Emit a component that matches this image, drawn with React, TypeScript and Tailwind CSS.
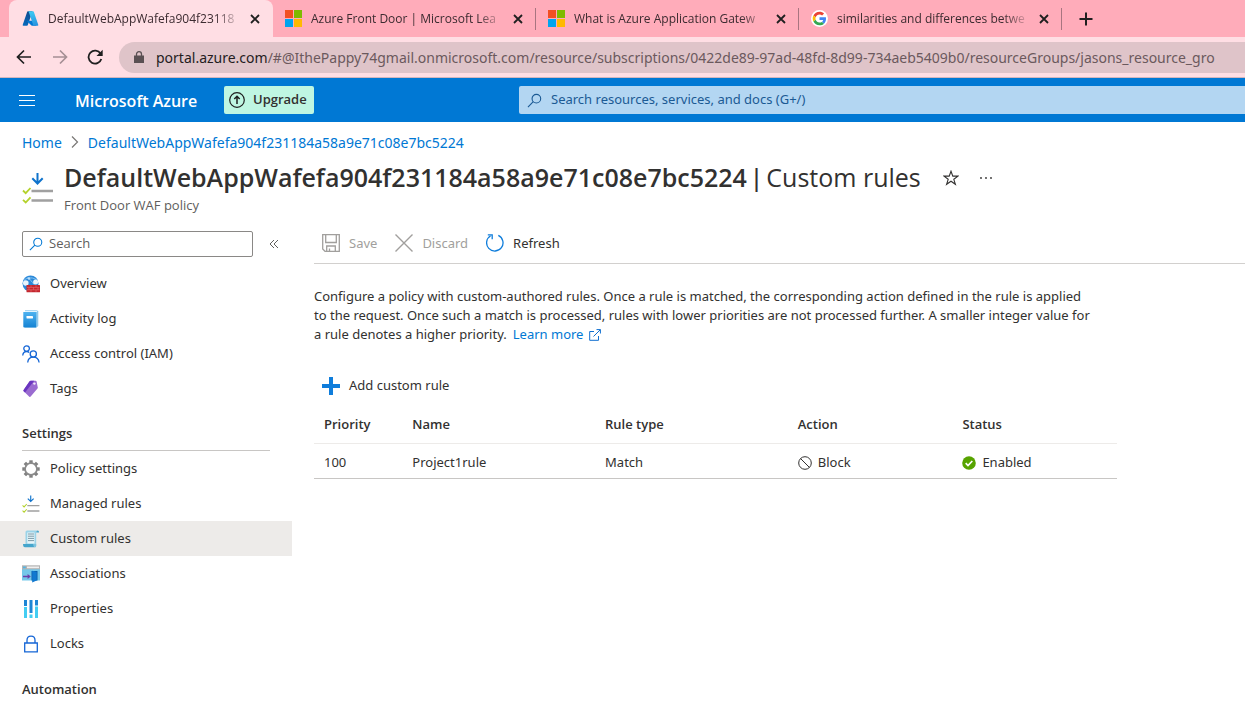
import React from "react";

type IconProps = { className?: string };

const AzureLogo = ({ className = "" }: IconProps) => (
  <svg viewBox="0 0 96 96" className={className} aria-hidden="true">
    <defs>
      <linearGradient id="azA" x1="0.6" y1="0" x2="0.3" y2="1">
        <stop offset="0" stopColor="#114a8b" />
        <stop offset="1" stopColor="#0669bc" />
      </linearGradient>
      <linearGradient id="azB" x1="0.4" y1="0" x2="0.6" y2="1">
        <stop offset="0" stopColor="#3ccbf4" />
        <stop offset="1" stopColor="#2892df" />
      </linearGradient>
    </defs>
    <path fill="url(#azA)" d="M33.3 6.5h26L32.4 86.500a4.200 4.200 0 0 1-3.900 2.800H8.100a4.100 4.100 0 0 1-3.900-5.500L29.400 9.400a4.200 4.200 0 0 1 3.900-2.900z" />
    <path fill="#0078d4" d="M71.200 60.300H29.900a1.900 1.900 0 0 0-1.300 3.300l26.500 24.800a4.200 4.200 0 0 0 2.900 1.100h23.400z" />
    <path fill="url(#azB)" d="M66.600 9.400a4.100 4.100 0 0 0-3.900-2.900H33.700a4.100 4.100 0 0 1 3.900 2.900l25.200 74.500a4.100 4.100 0 0 1-3.900 5.500h29a4.100 4.100 0 0 0 3.900-5.500z" />
  </svg>
);

const MicrosoftLogo = ({ className = "" }: IconProps) => (
  <svg viewBox="0 0 17 17" className={className} aria-hidden="true">
    <path fill="#f25022" d="M0 0h8v8H0z" />
    <path fill="#7fba00" d="M9 0h8v8H9z" />
    <path fill="#00a4ef" d="M0 9h8v8H0z" />
    <path fill="#ffb900" d="M9 9h8v8H9z" />
  </svg>
);

const GoogleLogo = ({ className = "" }: IconProps) => (
  <svg viewBox="-6 -6 60 60" className={className} aria-hidden="true">
    <circle cx="24" cy="24" r="30" fill="#fff" />
    <path fill="#EA4335" d="M24 9.500c3.540 0 6.710 1.220 9.210 3.600l6.850-6.850C35.900 2.380 30.470 0 24 0 14.620 0 6.510 5.380 2.560 13.220l7.980 6.190C12.430 13.720 17.740 9.500 24 9.500z" />
    <path fill="#4285F4" d="M46.980 24.550c0-1.570-.15-3.090-.38-4.550H24v9.020h12.940c-.58 2.960-2.260 5.480-4.780 7.180l7.730 6c4.510-4.180 7.090-10.360 7.090-17.650z" />
    <path fill="#FBBC05" d="M10.530 28.590c-.48-1.450-.76-2.990-.76-4.590s.27-3.140.76-4.590l-7.980-6.190C.92 16.460 0 20.120 0 24c0 3.880.92 7.540 2.560 10.780l7.970-6.190z" />
    <path fill="#34A853" d="M24 48c6.480 0 11.930-2.130 15.890-5.810l-7.730-6c-2.150 1.450-4.920 2.300-8.160 2.300-6.260 0-11.570-4.220-13.470-9.910l-7.980 6.190C6.510 42.620 14.620 48 24 48z" />
  </svg>
);

const CloseGlyph = () => (
  <svg viewBox="0 0 10 10" className="size-2.5" fill="none" stroke="#1f1f1f" strokeWidth="1.800" aria-hidden="true">
    <path d="M1 1l8 8M9 1L1 9" />
  </svg>
);

const Magnifier = ({ className = "" }: IconProps) => (
  <svg viewBox="0 0 16 16" className={className} fill="none" stroke="currentColor" strokeWidth="1.200" aria-hidden="true">
    <circle cx="10" cy="6" r="4.600" />
    <path d="M6.700 9.300L1 15" />
  </svg>
);

const OverviewIcon = () => (
  <svg viewBox="0 0 18 18" className="size-[18px]" aria-hidden="true">
    <circle cx="8.500" cy="8.500" r="8" fill="#2b88d8" />
    <path d="M2 5.500C5 2 12 2 15 5.500M5 1.500c3 3 5 5 7 8" stroke="#83c3f3" strokeWidth="1" fill="none" />
    <circle cx="3.800" cy="8" r="2.800" fill="#e8f4fc" />
    <circle cx="13.600" cy="7" r="2.500" fill="#e8f4fc" />
    <circle cx="7" cy="3.500" r="1.200" fill="#b9defa" />
    <rect x="4.500" y="10" width="13.500" height="7.200" rx="0.500" fill="#c4262e" />
    <path d="M5 12.400H17.500M5 14.800H17.500M9 10.300v2.100M14 10.300v2.100M7 12.400v2.400M11.500 12.400v2.400M16 12.400v2.400M9 14.800v2.100M14 14.800v2.100" stroke="#ea6b70" strokeWidth="0.600" />
  </svg>
);

const ActivityLogIcon = () => (
  <svg viewBox="0 0 18 18" className="size-[18px]" aria-hidden="true">
    <defs>
      <linearGradient id="book" x1="0" y1="0" x2="0" y2="1">
        <stop offset="0" stopColor="#4db2f0" />
        <stop offset="1" stopColor="#1583d3" />
      </linearGradient>
    </defs>
    <path d="M3 .3h11.500l1.800.6V16l-1.800 1.500H3z" fill="#8fc9ec" />
    <path d="M3 1h12v1H3z" fill="#e4f4fd" />
    <path d="M1.300 2h12.900v15.500H2.300a1 1 0 0 1-1-1z" fill="url(#book)" />
    <rect x="4.500" y="6" width="6.500" height="2.500" rx="0.400" fill="#fff" />
  </svg>
);

const AccessIcon = () => (
  <svg viewBox="0 0 18 18" className="size-[18px]" fill="none" stroke="#1566d6" strokeWidth="1.300" aria-hidden="true">
    <circle cx="4.600" cy="3.600" r="2.800" />
    <path d="M.7 10.500C1 8 2.600 6.500 4.600 6.500c1 0 1.900.4 2.600 1" />
    <circle cx="11.300" cy="9" r="3.100" />
    <path d="M5.700 17.500c.3-3.200 2.600-5.300 5.600-5.300s5.400 2.100 5.800 5.300" />
  </svg>
);

const TagIcon = () => (
  <svg viewBox="0 0 18 18" className="size-[18px]" aria-hidden="true">
    <path d="M8.600.7l5 .1c.5 0 .9.300 1 .8l1.200 5.900c.1.400 0 .8-.3 1.100l-6.800 8c-.4.500-.9.500-1.400.1L1.700 11.300c-.4-.4-.5-.900-.1-1.300L7.600 1.200c.3-.3.600-.5 1-.5z" fill="#9a6bd0" />
    <path d="M8.600.7l3.600.1L3 12.500 1.700 11.300c-.4-.4-.5-.900-.1-1.300L7.600 1.200c.3-.3.600-.5 1-.5z" fill="#6a35c0" />
    <circle cx="12.400" cy="3.600" r="1.200" fill="#f1e8fb" />
  </svg>
);

const gearTeeth = [0, 45, 90, 135, 180, 225, 270, 315];
const PolicyGearIcon = () => (
  <svg viewBox="0 0 18 18" className="size-[18px]" aria-hidden="true">
    {gearTeeth.map((angle) => (
      <path key={angle} d="M7.300.3h3.400v3H7.300z" fill="#808080" transform={`rotate(${angle} 9 9)`} />
    ))}
    <circle cx="9" cy="9" r="5.900" fill="#fff" stroke="#8b8b8b" strokeWidth="1.700" />
  </svg>
);

const RulesIcon = ({ className = "" }: IconProps) => (
  <svg viewBox="0 0 32 32" className={className} fill="none" aria-hidden="true">
    <path d="M15.500 1v10M10.300 6.300l5.200 5.200 5.200-5.200" stroke="#0f73cc" strokeWidth="2" />
    <path d="M1 18.500l2.700 2.700L8.500 16M1 27.800l2.700 2.700 4.800-5.200" stroke="#b4d22c" strokeWidth="1.800" />
    <path d="M9.500 19H31M9.500 28.500H31" stroke="#a0a0a0" strokeWidth="2.400" />
  </svg>
);

const ScrollIcon = () => (
  <svg viewBox="0 0 18 18" className="size-[18px]" aria-hidden="true">
    <path d="M5.200.5h10.300c-1 .4-1.300 1-1.300 2V16H3.500V2.500C3.500 1.200 4 .5 5.200.5z" fill="#9bd3e8" />
    <path d="M14.200 2.600c0-1.300.6-2.100 1.500-2.100s1.300.8 1.300 2.100z" fill="#45a5cc" />
    <path d="M5.300 2.500h7.200v11H5.300z" fill="#e6f5fa" />
    <path d="M6 4h6M6 6.200h6M6 8.400h6M6 10.600h6" stroke="#6f8f9d" strokeWidth="0.900" />
    <path d="M1 14h10.500c0 2 .6 3.300 2 3.300H3C1.600 17.300 1 16 1 14z" fill="#45a5cc" />
    <path d="M11.500 14h2.700v1.500c0 1-.3 1.800-.8 1.800-1.300 0-1.900-1.300-1.900-3.300z" fill="#7cc3df" />
  </svg>
);

const AssociationsIcon = () => (
  <svg viewBox="0 0 18 18" className="size-[18px]" aria-hidden="true">
    <path d="M0 1h18v14.500H0z" fill="#74c8ea" />
    <path d="M0 .3h18v4H0z" fill="#b3b3b3" />
    <path d="M1 1.500h2.800v1.700H1z" fill="#50b5e5" />
    <path d="M5 1.500h12v1.700H5z" fill="#efefef" />
    <path d="M9.500 6h6v9.500h-6z" fill="#0a5ca8" />
    <path d="M10.200 5.800l4.500 1.200v8.500l-4.500 2z" fill="#1179d0" />
    <path d="M1 10.800h4.600V9L8.800 11.500 5.600 14v-1.700H1z" fill="#6b3fa8" />
  </svg>
);

const PropertiesIcon = () => (
  <svg viewBox="0 0 18 18" className="size-[18px]" aria-hidden="true">
    <path d="M2 0h3v6H2zM7.500 0h3v13h-3zM13 0h3v5.500h-3z" fill="#1e86d5" />
    <path d="M2 7h3v11H2zM7.500 14.500h3V18h-3zM13 6.500h3V18h-3z" fill="#43cdf2" />
  </svg>
);

const LockIcon = () => (
  <svg viewBox="0 0 18 18" className="size-[18px]" fill="none" stroke="#1566d6" strokeWidth="1.300" aria-hidden="true">
    <path d="M2.700 8h12.600v8.800H2.700z" />
    <path d="M5 8V5.300C5 2.900 6.700 1.200 9 1.200s4 1.700 4 4.100V8" />
  </svg>
);

const SaveIcon = () => (
  <svg viewBox="0 0 18 18" className="size-[18px]" fill="none" stroke="#a19f9d" strokeWidth="1.300" aria-hidden="true">
    <path d="M.7.7h16.600v16.600H3L.7 15z" />
    <path d="M3.700.7v7.800h10.600V.7M4.700 17.300v-5.300h8.600v5.300M7.500 17.300v-2.800" />
  </svg>
);

const DiscardIcon = () => (
  <svg viewBox="0 0 18 18" className="size-[18px]" fill="none" stroke="#a19f9d" strokeWidth="1.400" aria-hidden="true">
    <path d="M.5.500l17 17M17.500.500l-17 17" />
  </svg>
);

const RefreshIcon = () => (
  <svg viewBox="0 0 18 18" className="size-[18px]" fill="none" stroke="#0f7ddb" strokeWidth="1.300" aria-hidden="true">
    <path d="M12.300 1.400a8.200 8.200 0 1 1-7.700.4" />
    <path d="M1.800.8h4.400v4.400" />
  </svg>
);

const tabs = [
  { title: "DefaultWebAppWafefa904f23118", icon: <AzureLogo className="size-[17px]" />, active: true },
  { title: "Azure Front Door | Microsoft Lea", icon: <MicrosoftLogo className="size-[17px]" />, active: false },
  { title: "What is Azure Application Gatew", icon: <MicrosoftLogo className="size-[17px]" />, active: false },
  { title: "similarities and differences betwe", icon: <GoogleLogo className="size-[17px]" />, active: false },
];

function TabStrip() {
  return (
    <div role="tablist" className="flex h-[37px] items-stretch overflow-hidden bg-[#ffacba] pl-[9px]">
      {tabs.map((tab) => (
        <div
          key={tab.title}
          role="tab"
          aria-selected={tab.active}
          className={`flex shrink-0 items-center ${tab.active ? "w-[264px] rounded-t-lg bg-[#ffdee4] pl-[13px]" : "w-[263px] pl-3"}`}
        >
          {tab.icon}
          <span className="ml-[9px] w-[194px] overflow-hidden whitespace-nowrap text-[12px] text-[#3c2b30] [mask-image:linear-gradient(to_right,black_86%,transparent)]">
            {tab.title}
          </span>
          <button aria-label="Close tab" className="ml-2 grid place-items-center">
            <CloseGlyph />
          </button>
          {!tab.active && <span className="ml-auto h-[22px] w-px bg-[#a87580]" />}
        </div>
      ))}
      <button aria-label="New tab" className="ml-[17px] grid place-items-center">
        <svg viewBox="0 0 14 14" className="size-3.5" stroke="#1f1f1f" strokeWidth="2" aria-hidden="true">
          <path d="M7 .5v13M.5 7h13" />
        </svg>
      </button>
    </div>
  );
}

function AddressBar() {
  return (
    <div className="flex h-[41px] items-center overflow-hidden border-b border-[#d3b6bd] bg-[#ffdee4] pl-4">
      <button aria-label="Back" className="grid place-items-center">
        <svg viewBox="0 0 16 16" className="size-4" fill="none" stroke="#1f1f1f" strokeWidth="1.700" aria-hidden="true">
          <path d="M15 8H2M8 1.500L1.500 8 8 14.500" />
        </svg>
      </button>
      <button aria-label="Forward" disabled className="ml-5 grid place-items-center">
        <svg viewBox="0 0 16 16" className="size-4" fill="none" stroke="#a58f94" strokeWidth="1.700" aria-hidden="true">
          <path d="M1 8h13M8 1.500L14.500 8 8 14.500" />
        </svg>
      </button>
      <button aria-label="Reload" className="ml-[19px] grid place-items-center">
        <svg viewBox="0 0 16 16" className="size-4" fill="none" stroke="#1f1f1f" strokeWidth="1.800" aria-hidden="true">
          <path d="M13.600 4.700A6.500 6.500 0 1 0 14.300 10" />
          <path d="M15.700.800v6.200H9.500z" fill="#1f1f1f" stroke="none" />
        </svg>
      </button>
      <div className="ml-4 flex h-[31px] min-w-0 flex-1 items-center overflow-hidden rounded-l-full bg-[#dfc4c9] pl-[15px]">
        <svg viewBox="0 0 10 12" className="h-3 w-2.5 shrink-0" aria-hidden="true">
          <path d="M0 4.600h10V12H0z" fill="#5a5053" />
          <path d="M2.500 5V3.200a2.500 2.500 0 0 1 5 0V5" fill="none" stroke="#5a5053" strokeWidth="1.300" />
        </svg>
        <span className="ml-3 font-['Noto_Sans',sans-serif] text-[14px] whitespace-nowrap text-[#6b595d]">
          <span className="text-[#241c1e]">portal.azure.com</span>
          /#@IthePappy74gmail.onmicrosoft.com/resource/subscriptions/0422de89-97ad-48fd-8d99-734aeb5409b0/resourceGroups/jasons_resource_gro
        </span>
      </div>
    </div>
  );
}

function PortalHeader() {
  return (
    <header className="flex h-11 items-center overflow-hidden bg-[#0078d4] pl-[19px]">
      <button aria-label="Show portal menu" className="grid place-items-center">
        <svg viewBox="0 0 16 12" className="h-3 w-4" stroke="#fff" strokeWidth="1" aria-hidden="true">
          <path d="M0 1.500h16M0 6.500h16M0 11.500h16" />
        </svg>
      </button>
      <a href="#home" className="ml-10 w-[149px] pt-0.5 text-[16px] font-semibold whitespace-nowrap text-white">
        Microsoft Azure
      </a>
      <button className="flex h-7 w-[90px] items-center gap-2 rounded-xs bg-[#bff6e2] pl-[5px] text-[13px] font-semibold text-[#323130]">
        <svg viewBox="0 0 16 16" className="size-4 shrink-0" fill="none" stroke="#1f1f1f" strokeWidth="1.200" aria-hidden="true">
          <circle cx="8" cy="8" r="7.300" />
          <path d="M8 12V4.500M5.300 7L8 4.300 10.700 7" strokeWidth="1.500" />
        </svg>
        Upgrade
      </button>
      <label className="ml-[205px] flex h-7 flex-1 items-center rounded-l-xs bg-[#b3d6f2] pl-2 text-[#1b5a94]">
        <Magnifier className="size-[15px] shrink-0" />
        <input
          type="text"
          aria-label="Search resources, services, and docs"
          placeholder="Search resources, services, and docs (G+/)"
          className="ml-[9px] min-w-0 flex-1 bg-transparent font-['Noto_Sans',sans-serif] text-[13px] outline-none placeholder:text-[#1b5a94]"
        />
      </label>
    </header>
  );
}

function TitleArea() {
  return (
    <div className="pl-[22px]">
      <nav aria-label="Breadcrumb" className="flex h-10 items-center font-['Noto_Sans',sans-serif] text-[14px] text-[#0078d4]">
        <a href="#home">Home</a>
        <svg viewBox="0 0 8 12" className="mx-[9px] h-3 w-2" fill="none" stroke="#797775" strokeWidth="1.200" aria-hidden="true">
          <path d="M1 .5L6.500 6 1 11.500" />
        </svg>
        <a href="#policy">DefaultWebAppWafefa904f231184a58a9e71c08e7bc5224</a>
      </nav>
      <div className="flex">
        <RulesIcon className="mt-2.5 size-8 shrink-0" />
        <div className="ml-2.5">
          <div className="flex h-[30px] items-center">
            <h1 className="text-[25px] leading-[30px] font-semibold whitespace-nowrap text-[#323130]">
              DefaultWebAppWafefa904f231184a58a9e71c08e7bc5224
              <span className="font-normal">
                {" "}
                <span className="font-['Liberation_Sans',sans-serif]">|</span> Custom rules
              </span>
            </h1>
            <button aria-label="Add to favorites" className="ml-[22px] grid place-items-center pt-0.5">
              <svg viewBox="0 0 16 16" className="size-4" fill="none" stroke="#323130" strokeWidth="1.100" aria-hidden="true">
                <path d="M8 1.200l1.800 4.900h5.200l-4.200 3.200 1.600 5L8 11.200l-4.400 3.100 1.600-5L1 6.100h5.200z" />
              </svg>
            </button>
            <button aria-label="More" className="ml-5 grid place-items-center pt-0.5">
              <svg viewBox="0 0 14 4" className="h-1 w-3.5" fill="#323130" aria-hidden="true">
                <circle cx="2" cy="2" r="0.900" />
                <circle cx="7" cy="2" r="0.900" />
                <circle cx="12" cy="2" r="0.900" />
              </svg>
            </button>
          </div>
          <p className="leading-[26px] text-[#605e5c]">Front Door WAF policy</p>
        </div>
      </div>
    </div>
  );
}

const generalItems = [
  { label: "Overview", icon: <OverviewIcon /> },
  { label: "Activity log", icon: <ActivityLogIcon /> },
  { label: "Access control (IAM)", icon: <AccessIcon /> },
  { label: "Tags", icon: <TagIcon /> },
];

const settingsItems = [
  { label: "Policy settings", icon: <PolicyGearIcon /> },
  { label: "Managed rules", icon: <RulesIcon className="size-[18px]" /> },
  { label: "Custom rules", icon: <ScrollIcon />, selected: true },
  { label: "Associations", icon: <AssociationsIcon /> },
  { label: "Properties", icon: <PropertiesIcon /> },
  { label: "Locks", icon: <LockIcon /> },
];

function MenuList({ items }: { items: { label: string; icon: React.ReactNode; selected?: boolean }[] }) {
  return (
    <ul className="font-['Noto_Sans',sans-serif]">
      {items.map((item) => (
        <li key={item.label}>
          <a
            href="#item"
            aria-current={item.selected ? "page" : undefined}
            className={`flex h-[35px] items-center gap-2.5 pl-[22px] ${item.selected ? "bg-[#edebe9]" : ""}`}
          >
            {item.icon}
            {item.label}
          </a>
        </li>
      ))}
    </ul>
  );
}

function Sidebar() {
  return (
    <aside className="w-[292px] shrink-0">
      <div className="flex items-center pl-[22px]">
        <label className="flex h-[26px] w-[231px] items-center rounded-xs border border-[#8a8886] pl-1.5 text-[#0078d4]">
          <Magnifier className="size-3.5 shrink-0" />
          <input
            type="text"
            aria-label="Search menu"
            placeholder="Search"
            className="ml-1.5 min-w-0 flex-1 bg-transparent text-[13px] text-[#323130] outline-none placeholder:text-[#605e5c]"
          />
        </label>
        <button aria-label="Collapse menu" className="ml-4 grid place-items-center">
          <svg viewBox="0 0 10 10" className="size-2.5" fill="none" stroke="#605e5c" strokeWidth="1" aria-hidden="true">
            <path d="M5 1L1 5l4 4M9 1L5 5l4 4" />
          </svg>
        </button>
      </div>
      <div className="pt-[9px]">
        <MenuList items={generalItems} />
        <h2 className="mx-[22px] mt-3 flex h-[33px] items-center border-b border-[#c8c6c4] font-semibold">Settings</h2>
        <MenuList items={settingsItems} />
        <h2 className="mx-[22px] mt-3 flex h-[33px] items-center font-semibold">Automation</h2>
      </div>
    </aside>
  );
}

function RulesTable() {
  return (
    <table className="mt-1.5 w-full table-fixed border-b border-[#c8c6c4] text-left">
      <colgroup>
        <col className="w-[11%]" />
        <col className="w-[24%]" />
        <col className="w-[24%]" />
        <col className="w-[20.5%]" />
        <col className="w-[20.5%]" />
      </colgroup>
      <thead>
        <tr className="h-[38px] border-b border-[#edebe9]">
          <th scope="col" className="pt-0.5 pl-2.5 font-semibold">Priority</th>
          <th scope="col" className="pt-0.5 pl-2.5 font-semibold">Name</th>
          <th scope="col" className="pt-0.5 pl-2.5 font-semibold">Rule type</th>
          <th scope="col" className="pt-0.5 pl-2.5 font-semibold">Action</th>
          <th scope="col" className="pt-0.5 pl-2.5 font-semibold">Status</th>
        </tr>
      </thead>
      <tbody className="font-['Noto_Sans',sans-serif]">
        <tr className="h-[35px]">
          <td className="pt-1 pl-2.5">100</td>
          <td className="pt-1 pl-2.5">Project1rule</td>
          <td className="pt-1 pl-2.5">Match</td>
          <td className="pt-1 pl-2.5">
            <span className="flex items-center gap-1.5">
              <svg viewBox="0 0 14 14" className="size-3.5" fill="none" stroke="#323130" strokeWidth="1" aria-hidden="true">
                <circle cx="7" cy="7" r="6.300" />
                <path d="M2.600 2.600l8.800 8.800" />
              </svg>
              Block
            </span>
          </td>
          <td className="pt-1 pl-2.5">
            <span className="flex items-center gap-1.5">
              <svg viewBox="0 0 14 14" className="size-3.5" fill="none" aria-hidden="true">
                <circle cx="7" cy="7" r="6.800" fill="#57a300" />
                <path d="M3.700 7.200l2.300 2.300 4.300-4.500" stroke="#fff" strokeWidth="1.700" />
              </svg>
              Enabled
            </span>
          </td>
        </tr>
      </tbody>
    </table>
  );
}

function MainPane() {
  return (
    <main className="ml-[22px] min-w-0 flex-1">
      <div role="toolbar" className="flex h-[33px] items-start border-b border-[#d2d0ce] pl-2 font-['Noto_Sans',sans-serif] leading-6">
        <button disabled className="flex items-center gap-[9px] text-[#a19f9d]">
          <SaveIcon />
          Save
        </button>
        <button disabled className="ml-[18px] flex items-center gap-[9px] text-[#a19f9d]">
          <DiscardIcon />
          Discard
        </button>
        <button className="ml-[18px] flex items-center gap-[9px]">
          <RefreshIcon />
          Refresh
        </button>
      </div>
      <div className="max-w-[803px]">
        <p className="mt-[23px] font-['Noto_Sans',sans-serif] leading-[19px]">
          Configure a policy with custom-authored rules. Once a rule is matched, the corresponding action defined in the rule is applied
          <br />
          to the request. Once such a match is processed, rules with lower priorities are not processed further. A smaller integer value for
          <br />
          a rule denotes a higher priority.
          <a href="#learn" className="ml-1.5 inline-flex items-center gap-1.5 whitespace-nowrap text-[#0078d4]">
            Learn more
            <svg viewBox="0 0 12 12" className="size-3" fill="none" stroke="#0f6fd0" strokeWidth="1" aria-hidden="true">
              <path d="M5 2.500H.7v8.800h8.800V7M4.500 7.500L11.300.7M7.500.6h3.900v3.900" />
            </svg>
          </a>
        </p>
        <button className="mt-[29px] ml-2 flex h-[26px] items-center gap-[9px] font-['Noto_Sans',sans-serif]">
          <svg viewBox="0 0 18 18" className="size-[18px]" fill="#0f7ddb" aria-hidden="true">
            <path d="M7 0h4v7h7v4h-7v7H7v-7H0V7h7z" />
          </svg>
          Add custom rule
        </button>
        <RulesTable />
      </div>
    </main>
  );
}

export default function App() {
  return (
    <div className="min-h-screen overflow-hidden bg-white font-['Open_Sans',sans-serif] text-[13px] text-[#323130]">
      <TabStrip />
      <AddressBar />
      <PortalHeader />
      <TitleArea />
      <div className="mt-[13px] flex">
        <Sidebar />
        <MainPane />
      </div>
    </div>
  );
}
